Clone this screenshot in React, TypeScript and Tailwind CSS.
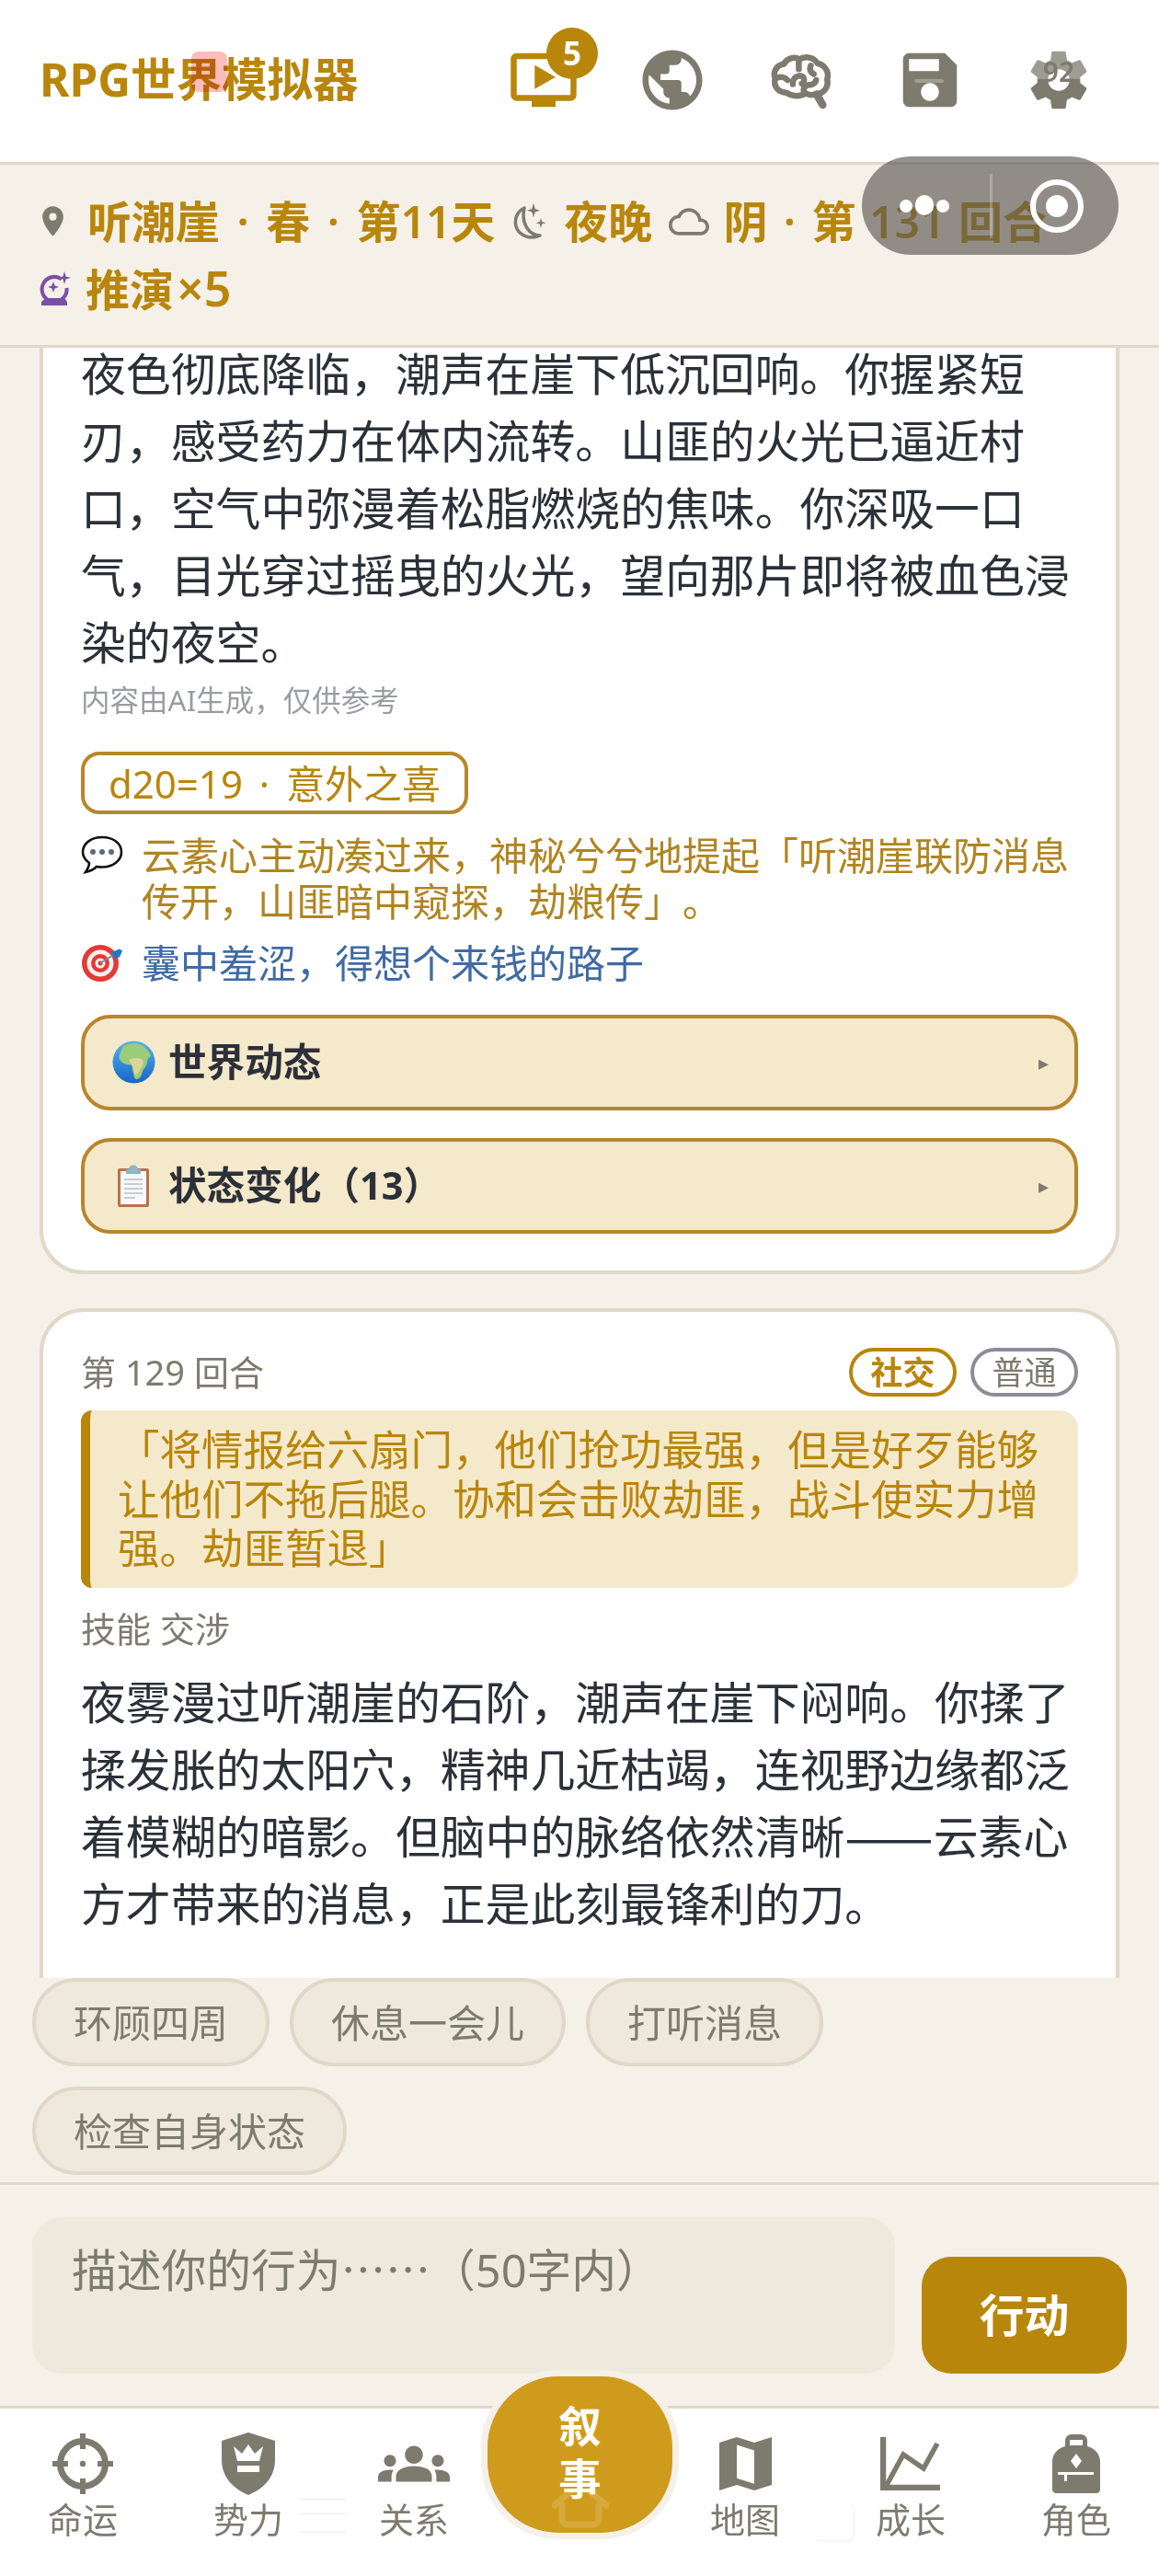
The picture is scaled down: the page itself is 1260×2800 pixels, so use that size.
import React from "react";
import {
  MdOndemandVideo,
  MdPublic,
  MdSave,
  MdSettings,
  MdPlace,
  MdCloudQueue,
  MdGroups,
} from "react-icons/md";

const FONT = `"Noto Sans", "Noto Sans CJK SC", sans-serif`;

const Cjk = ({ children, className = "" }: { children: React.ReactNode; className?: string }) => (
  <span className={`font-['Noto_Sans_CJK_SC'] ${className}`}>{children}</span>
);

function Brain() {
  return (
    <svg width="78" height="78" viewBox="0 0 24 24" fill="none" stroke="#7d7b6e" strokeWidth="2" strokeLinecap="round" strokeLinejoin="round">
      <path d="M7 16.200C4.300 16.200 2.600 14 3.300 11.600 2.400 9.200 3.900 6.900 6.200 6.700 7.200 4.700 9.800 4 11.400 5.100 13.400 3.800 16.300 4.400 17.400 6.400 19.900 6.900 21.500 9.300 20.700 11.800 21.300 14.200 19.600 16.600 17 16.600 15.600 17.200 14.600 17.100 13.600 16.400 11.800 17.600 9 17.600 7 16.200Z" />
      <path d="M17.200 16.800L19.200 20.300" strokeWidth="2.600" />
      <path d="M11.200 5.200V8.400M3.600 11.400C5 10.600 6.600 11 7.400 12M9.200 13.400C9 11.800 10.200 10.400 11.800 10.600 13.200 10.800 13.400 12.600 12.200 13.200M13 16.200C12.400 14.800 13.400 13.600 15 13.600 16 13.600 16.800 13 17 12M15.200 7.200C14.600 8.400 15 9.400 16.200 10" />
    </svg>
  );
}

function MoonStars() {
  return (
    <svg width="38" height="42" viewBox="0 0 38 42" fill="none">
      <path d="M13 6C5 10 2 18 4 26c3 10 15 15 26 10C19 36 9 24 13 6Z" stroke="#7d7b6e" strokeWidth="3.500" strokeLinejoin="round" />
      <path d="M23 1l1.800 6 5.200 1.700-5.200 1.700L23 16l-1.800-5.600L16 8.700l5.200-1.700z" fill="#7d7b6e" />
      <path d="M31 17l1.300 4 4.200 1.300-4.200 1.300L31 28l-1.300-4.400-4.200-1.300 4.200-1.300z" fill="#7d7b6e" />
    </svg>
  );
}

function Crystal() {
  return (
    <svg width="34" height="38" viewBox="0 0 34 38" fill="#7b4fa6">
      <path d="M24 9.500A13.500 13.500 0 1 0 29.500 19" fill="none" stroke="#7b4fa6" strokeWidth="4" />
      <path d="M15 12l1.600 4.400L21 18l-4.400 1.600L15 24l-1.600-4.400L9 18l4.400-1.600z" />
      <path d="M27 1l1.600 5.400L34 8l-5.400 1.600L27 15l-1.600-5.400L20 8l5.400-1.600z" />
      <path d="M7 30h20l3 4v4H2v-4z" />
    </svg>
  );
}

function Bubble() {
  return (
    <svg width="46" height="44" viewBox="0 0 46 44" fill="none">
      <path d="M23 2C11 2 2 9 2 18c0 5 3 9 7 12 0 4-2 7-4 10 5-1 9-3 12-6 2 .4 4 .5 6 .5 12 0 21-7 21-16.500S35 2 23 2Z" fill="#fff" stroke="#111" strokeWidth="2.600" />
      <circle cx="13" cy="18" r="3" fill="#5b6b78" />
      <circle cx="23" cy="18" r="3" fill="#5b6b78" />
      <circle cx="33" cy="18" r="3" fill="#5b6b78" />
    </svg>
  );
}

function Target() {
  return (
    <svg width="46" height="42" viewBox="0 0 46 42">
      <circle cx="21" cy="21" r="20" fill="#e53935" />
      <circle cx="21" cy="21" r="14.500" fill="#f5f1ee" />
      <circle cx="21" cy="21" r="10" fill="#e53935" />
      <circle cx="21" cy="21" r="5.500" fill="#f5f1ee" />
      <circle cx="21" cy="21" r="2.500" fill="#e53935" />
      <path d="M21 21L37 11" stroke="#7a8a94" strokeWidth="2" />
      <path d="M33 9l9-3.500 3 2-3 7-6 1z" fill="#1f78c8" />
    </svg>
  );
}

function Earth() {
  return (
    <svg width="47" height="47" viewBox="0 0 47 47">
      <defs>
        <linearGradient id="sea" x1="0" y1="0" x2="0" y2="1">
          <stop offset="0" stopColor="#56b4ec" />
          <stop offset="1" stopColor="#1565c8" />
        </linearGradient>
      </defs>
      <circle cx="23.500" cy="23.500" r="23" fill="url(#sea)" />
      <path d="M12 6c5-3 14-4 20-1 3 2 8 6 10 11-2 3-4 4-4 8-1 5-5 7-6 13-2 5-6 7-8 3-1-6-3-9-2-14-4 1-9 0-12-3-3-2-3-7-1-10 1-3 2-5 3-7z" fill="#9ccc7a" />
      <path d="M18 21c4-2 10-3 15 0 2 3-1 8-4 13-2 3-4 4-5 1-1-5-3-9-6-14z" fill="#dcd596" />
    </svg>
  );
}

function Clipboard() {
  return (
    <svg width="36" height="47" viewBox="0 0 36 47">
      <rect x="1" y="5" width="34" height="42" rx="2" fill="#b8734a" />
      <rect x="4" y="8" width="28" height="36" fill="#f7f8f8" />
      <path d="M13 6c0-6 10-6 10 0h3v5H10V6z" fill="#90b4c8" />
      <path d="M8 17h20M8 22h20M8 27h20M8 32h20M8 37h12" stroke="#c6cdd2" strokeWidth="1.800" />
    </svg>
  );
}

function Crosshair() {
  return (
    <svg width="66" height="66" viewBox="0 0 66 66" fill="#7d7b6e">
      <circle cx="33" cy="33" r="24.500" fill="none" stroke="#7d7b6e" strokeWidth="7" />
      <rect x="30" y="0" width="6" height="17" />
      <rect x="30" y="49" width="6" height="17" />
      <rect x="0" y="30" width="17" height="6" />
      <rect x="49" y="30" width="17" height="6" />
      <circle cx="33" cy="33" r="3.200" />
    </svg>
  );
}

function ShieldCrown() {
  return (
    <svg width="58" height="68" viewBox="0 0 58 68">
      <path d="M29 0L58 9V30C58 48 46 61 29 68 12 61 0 48 0 30V9Z" fill="#7d7b6e" />
      <path d="M13 15L22 23 29 13 36 23 45 15 41 31H17Z" fill="#fff" />
      <rect x="17" y="36" width="24" height="7" fill="#fff" />
    </svg>
  );
}

function MapIcon() {
  return (
    <svg width="57" height="58" viewBox="0 0 24 24" preserveAspectRatio="none">
      <path fillRule="evenodd" fill="#7d7b6e" d="M0 2.500L8 0 16 2.500 24 0V21.500L16 24 8 21.500 0 24ZM8 3.500V18.500L16 21V6Z" />
    </svg>
  );
}

function ChartIcon() {
  return (
    <svg width="66" height="58" viewBox="0 0 66 58" fill="none">
      <path d="M3 0V55H65" stroke="#7d7b6e" strokeWidth="6.500" />
      <path d="M7 52L25 19 47 34 62 7" stroke="#7d7b6e" strokeWidth="5.500" />
    </svg>
  );
}

function Pack() {
  return (
    <svg width="52" height="64" viewBox="0 0 52 64">
      <path d="M14 13V7c0-4 3-7 7-7h10c4 0 7 3 7 7v6c8 2 14 8 14 17v30c0 2-2 4-4 4H4c-2 0-4-2-4-4V30c0-9 6-15 14-17Z" fill="#7d7b6e" />
      <rect x="19" y="6" width="14" height="6" fill="#fff" />
      <path d="M26 21l6 8-6 8-6-8z" fill="#fff" />
      <path d="M6 41h39v3H16v7h-3v-7H6z" fill="#fff" />
    </svg>
  );
}

function NavItem({ label, children }: { label: string; children: React.ReactNode }) {
  return (
    <div className="flex flex-col items-center">
      <div className="flex h-[78px] w-[78px] items-center justify-center">{children}</div>
      <div className="text-[38px] leading-[42px] text-[#7d7b6e]">{label}</div>
    </div>
  );
}

function Collapsible({ icon, label }: { icon: React.ReactNode; label: string }) {
  return (
    <div className="flex h-[104px] items-center rounded-[32px] border-[4px] border-[#b8862b] bg-[#f5e9cc] pb-[2px] pl-[28px] pr-[28px]">
      <div className="flex w-[50px] justify-center">{icon}</div>
      <div className="ml-[13px] flex-1 text-[41.600px] font-bold text-[#2c3038]">{label}</div>
      <div className="text-[22px] text-[#7d7b6e]">▸</div>
    </div>
  );
}

const Chip = ({ t }: { t: string }) => (
  <div className="flex h-[96px] items-center rounded-[48px] border-[4px] border-[#e0d8c8] bg-[#efe9dd] px-[41px] text-[42px] text-[#7d7b6e]">
    {t}
  </div>
);

export default function App() {
  return (
    <div className="relative flex h-[2800px] w-[1260px] flex-col overflow-hidden bg-[#f5f0e8] [text-spacing-trim:space-all]" style={{ fontFamily: FONT }}>
      {/* header */}
      <header className="relative flex h-[179px] shrink-0 items-center justify-between border-b-[3px] border-[#e0d8c8] bg-white pb-[2px] pl-[43px] pr-[70px]">
        <div className="relative text-[49.500px] font-bold leading-none text-[#b8860b]">
          RPG世界模拟器
          <span className="absolute left-[165px] top-[-6px] h-[44px] w-[39px] rounded-[8px] bg-[#fdbcbc] mix-blend-multiply" />
        </div>
        <div className="flex items-center gap-[62px]">
          <div className="relative h-[78px] w-[78px] text-[#b8860b]">
            <MdOndemandVideo size={78} />
            <span className="absolute left-[42px] top-[-18px] flex h-[56px] w-[56px] items-center justify-center rounded-full bg-[#b8860b] text-[35px] font-bold text-white">5</span>
          </div>
          <MdPublic size={78} color="#7d7b6e" />
          <Brain />
          <div className="relative h-[78px] w-[78px]">
            <MdSave size={78} color="#7d7b6e" />
            <span className="absolute left-[22px] top-[38px] h-[4px] w-[32px] rounded-full bg-[#a09e92]" />
          </div>
          <div className="relative h-[78px] w-[78px]">
            <MdSettings size={78} color="#7d7b6e" />
            <span className="absolute left-[7px] top-[4px] h-[34px] w-[64px] bg-white/25" />
            <span className="absolute left-0 top-[15px] w-full text-center text-[30px] font-semibold leading-[30px] text-[#7d7b6e]">92</span>
          </div>
        </div>
      </header>

      {/* status */}
      <section className="flex h-[199px] shrink-0 flex-col border-b-[3px] border-[#e0d8c8] pl-[43px] pt-[25px] text-[48px] font-semibold text-[#b8860b]">
        <div className="flex h-[73px] items-center">
          <MdPlace size={39} color="#7d7b6e" className="ml-[-5px]" />
          <span className="ml-[18px] whitespace-pre">
            听潮崖 <span className="mx-[6px]">·</span> 春 <span className="mx-[6px]">·</span> 第11天
          </span>
          <span className="ml-[19px] flex"><MoonStars /></span>
          <span className="ml-[18px]">夜晚</span>
          <MdCloudQueue size={44} color="#7d7b6e" className="ml-[18px]" />
          <span className="ml-[15px] whitespace-pre">
            阴 <span className="mx-[5px]">·</span> 第 <span className="mx-[2px]">131</span> 回合
          </span>
        </div>
        <div className="flex h-[72px] items-center">
          <Crystal />
          <span className="ml-[16px]">
            推演<span className="mx-[3px] text-[52px]">×5</span>
          </span>
        </div>
      </section>

      {/* scrolling content */}
      <main className="min-h-0 flex-1 overflow-hidden px-[43px]">
        <article className="mt-[-60px] rounded-[48px] border-[4px] border-[#e0d8c8] bg-white px-[41px] pb-[40px] pt-[48px]">
          <p className="text-[48.850px] leading-[73.100px] text-[#2c3038]">
            夜色彻底降临，潮声在崖下低沉回响。你握紧短刃，感受药力在体内流转。山匪的火光已逼近村口，空气中弥漫着松脂燃烧的焦味。你深吸一口气，目光穿过摇曳的火光，望向那片即将被血色浸染的夜空。
          </p>
          <div className="text-[31.500px] leading-[52px] text-[#9a9ca3]">内容由AI生成，仅供参考</div>
          <div className="mt-[30px] flex h-[68px] w-[421px] items-center justify-center rounded-[20px] border-[4px] border-[#b8862b] text-[42px] text-[#b8860b]">
            d20=19<span className="mx-[7px] whitespace-pre"> · </span>意外之喜
          </div>
          <div className="mt-[20px] flex text-[42px] leading-[50px] text-[#b08520]">
            <div className="flex w-[66px] shrink-0 pt-[3px]"><Bubble /></div>
            <div>云素心主动凑过来，神秘兮兮地提起「听潮崖联防消息传开，山匪暗中窥探，劫粮传」。</div>
          </div>
          <div className="mt-[17px] flex items-center text-[42px] leading-[50px] text-[#3f6ba3]">
            <div className="flex w-[66px] shrink-0"><Target /></div>
            <div>囊中羞涩，得想个来钱的路子</div>
          </div>
          <div className="mt-[31px] flex flex-col gap-[30px]">
            <Collapsible icon={<Earth />} label="世界动态" />
            <Collapsible icon={<Clipboard />} label="状态变化（13）" />
          </div>
        </article>

        <article className="mt-[37px] rounded-[48px] border-[4px] border-[#e0d8c8] bg-white px-[41px] pt-[39px]">
          <div className="flex h-[53px] items-center justify-between">
            <div className="text-[38px] text-[#7d7b6e]">第 129 回合</div>
            <div className="flex gap-[15px]">
              <span className="flex h-[53px] w-[117px] items-center justify-center rounded-[27px] border-[4px] border-[#b8860b] text-[35px] font-bold text-[#b8860b]">社交</span>
              <span className="flex h-[53px] w-[117px] items-center justify-center rounded-[27px] border-[4px] border-[#8c8c98] text-[35px] text-[#7d7b6e]">普通</span>
            </div>
          </div>
          <div className="mt-[15px] rounded-r-[20px] rounded-l-[12px] border-l-[10px] border-[#b8860b] bg-[#f5e9cc] py-[16px] pl-[30px] pr-[20px] text-[45.500px] leading-[53.500px] text-[#b8860b]">
            「将情报给六扇门，他们抢功最强，但是好歹能够让他们不拖后腿。协和会击败劫匪，战斗使实力增强。劫匪暂退」
          </div>
          <div className="mt-[20px] text-[38px] leading-[48px] text-[#7d7b6e]">技能 交涉</div>
          <p className="mt-[20px] pb-[140px] text-[48.850px] leading-[73.100px] text-[#2c3038]">
            夜雾漫过听潮崖的石阶，潮声在崖下闷响。你揉了揉发胀的太阳穴，精神几近枯竭，连视野边缘都泛着模糊的暗影。但脑中的脉络依然清晰<Cjk className="relative top-[3px] text-[57.500px] leading-none">——</Cjk>云素心方才带来的消息，正是此刻最锋利的刀。
          </p>
        </article>
      </main>

      {/* quick chips */}
      <div className="flex shrink-0 flex-wrap gap-[22px] border-b-[3px] border-[#e0d8c8] pb-[8px] pl-[35px] pr-[35px]">
        <Chip t="环顾四周" />
        <Chip t="休息一会儿" />
        <Chip t="打听消息" />
        <Chip t="检查自身状态" />
      </div>

      {/* input */}
      <div className="flex h-[243px] shrink-0 items-end gap-[29px] border-b-[3px] border-[#e0d8c8] pb-[35px] pl-[35px] pr-[35px]">
        <div className="h-[170px] w-[938px] rounded-[32px] bg-[#efe9dd] pl-[43px] pt-[18px] text-[48.750px] leading-[73px] text-[#7d7b6e]">
          描述你的行为<Cjk>……</Cjk>（50字内）
        </div>
        <div className="flex h-[127px] w-[223px] items-center justify-center rounded-[32px] bg-[#b8860b] text-[48.750px] font-bold text-white">
          行动
        </div>
      </div>

      {/* nav */}
      <nav className="relative grid h-[182px] shrink-0 grid-cols-7 bg-white pt-[21px]">
        <NavItem label="命运"><Crosshair /></NavItem>
        <NavItem label="势力"><ShieldCrown /></NavItem>
        <NavItem label="关系"><MdGroups size={78} color="#7d7b6e" /></NavItem>
        <div />
        <NavItem label="地图"><MapIcon /></NavItem>
        <NavItem label="成长"><ChartIcon /></NavItem>
        <NavItem label="角色"><Pack /></NavItem>

        {/* faint system nav marks */}
        <span className="absolute left-[325px] top-[97px] h-[3px] w-[50px] bg-[#f6f6f6]" />
        <span className="absolute left-[325px] top-[113px] h-[3px] w-[50px] bg-[#f6f6f6]" />
        <span className="absolute left-[325px] top-[133px] h-[3px] w-[50px] bg-[#f6f6f6]" />
        <span className="absolute left-[885px] top-[103px] h-[42px] w-[45px] rounded-[8px] border-b-[3px] border-r-[3px] border-[#f8f8f8]" />

        <div className="absolute left-[523px] top-[-42px] flex h-[184px] w-[215px] flex-col items-center rounded-[84px] border-[7px] border-[#f5f0e8] bg-[#cf9b1c] pt-[25px] text-[46px] font-bold leading-[57px] text-white">
          <span>叙</span>
          <span>事</span>
          <svg className="absolute left-[70px] top-[122px]" width="62" height="44" viewBox="0 0 62 44" fill="none" stroke="#fff" strokeOpacity="0.15" strokeWidth="7" strokeLinecap="round">
            <path d="M3 18L31 -6 59 18M11 18V33a6 6 0 0 0 6 6H45a6 6 0 0 0 6-6V18" />
          </svg>
        </div>
      </nav>

      {/* mini-program capsule */}
      <div className="absolute left-[937px] top-[170px] flex h-[107px] w-[279px] items-center rounded-[54px] bg-[rgba(90,88,82,0.65)]">
        <span className="absolute left-[139px] top-[19px] h-[70px] w-[3px] bg-white/25" />
        <span className="absolute left-[41px] top-[47px] h-[14px] w-[14px] rounded-full bg-white" />
        <span className="absolute left-[58px] top-[42px] h-[22px] w-[20px] rounded-full bg-white" />
        <span className="absolute left-[81px] top-[47px] h-[14px] w-[14px] rounded-full bg-white" />
        <span className="absolute left-[183px] top-[25px] flex h-[58px] w-[58px] items-center justify-center rounded-full border-[6px] border-white">
          <span className="h-[24px] w-[24px] rounded-full bg-white" />
        </span>
      </div>
    </div>
  );
}
